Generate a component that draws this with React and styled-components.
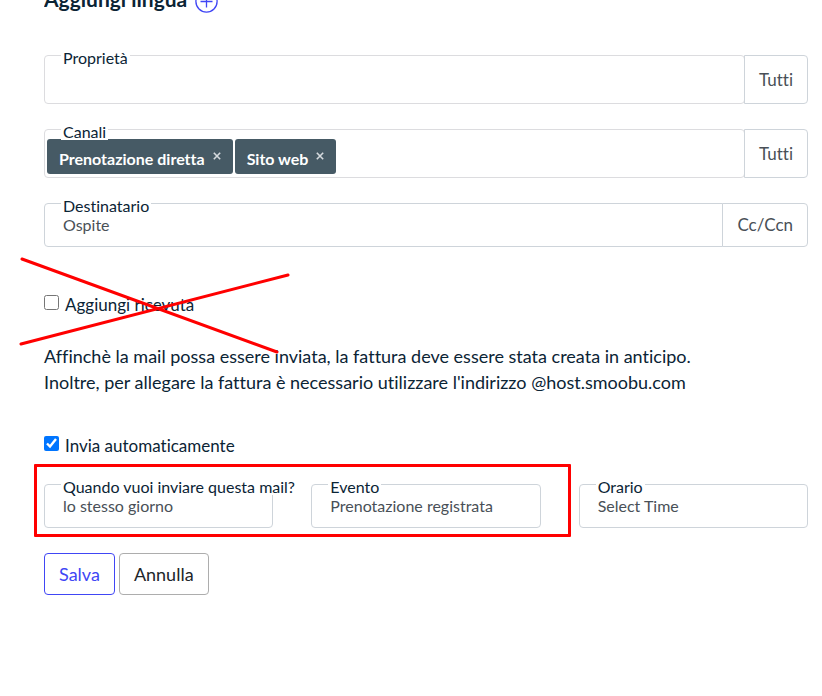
import React, { useState } from "react";
import styled, { createGlobalStyle, css } from "styled-components";

const GlobalStyle = createGlobalStyle`
  *, *::before, *::after { box-sizing: border-box; }
  body {
    margin: 0;
    background: #fff;
    color: #0b2435;
    font-family: Lato, "Open Sans", sans-serif;
    font-size: 17px;
    font-variant-ligatures: none;
    line-height: 26px;
  }
  button, input, select { font: inherit; color: inherit; font-variant-ligatures: none; }
`;

const Page = styled.main`
  padding: 0 14px 40px 44px;
`;

const Heading = styled.header`
  display: flex;
  align-items: flex-end;
  gap: 8px;
  height: 13px;
  margin-bottom: 42px;
  overflow: hidden;
`;

const Title = styled.h2`
  margin: 0;
  font-size: 21px;
  line-height: 28px;
  font-weight: 700;
`;

const AddButton = styled.button`
  display: flex;
  padding: 0;
  border: 0;
  background: none;
  color: #4046f5;
  cursor: pointer;
`;

const Form = styled.form`
  display: flex;
  flex-direction: column;
`;

const Stack = styled.div`
  display: flex;
  flex-direction: column;
  gap: 25px;
`;

const Group = styled.div`
  position: relative;
  display: flex;
  min-width: 0;
`;

const FloatingLabel = styled.label`
  position: absolute;
  top: -6px;
  left: 17px;
  padding: 0 2px;
  background: #fff;
  font-size: 16px;
  line-height: 17px;
  white-space: nowrap;
`;

const outline = css`
  border: 1px solid ${(p) => (p.$soft ? "#dcdcdf" : "#ced4da")};
  border-radius: ${(p) => (p.$joined ? "4px 0 0 4px" : "4px")};
  background: #fff;
`;

const TagBox = styled.div`
  ${outline}
  display: flex;
  flex: 1;
  align-items: flex-end;
  gap: 2px;
  min-width: 0;
  height: 49px;
  padding: 3px 2px;
`;

const TagInput = styled.input`
  flex: 1;
  min-width: 0;
  height: 35px;
  border: 0;
  outline: 0;
  background: transparent;
`;

const Tag = styled.span`
  display: flex;
  gap: 8px;
  height: 35px;
  padding: 0 12px;
  border-radius: 3px;
  background: #465a65;
  color: #fff;
  font-size: 16px;
  font-weight: 700;
  line-height: 40px;
  white-space: nowrap;
`;

const RemoveTag = styled.button`
  display: flex;
  align-items: center;
  height: 34px;
  padding: 0;
  border: 0;
  background: none;
  color: #d5dade;
  cursor: pointer;
`;

const Select = styled.select`
  ${outline}
  flex: 1;
  min-width: 0;
  height: 44px;
  padding: 0 18px;
  appearance: none;
  color: #495057;
  font-size: 16px;
  line-height: 24px;
`;

const SideButton = styled.button`
  margin-left: -1px;
  padding: 0 14px;
  border: 1px solid #ced4da;
  border-radius: 0 4px 4px 0;
  background: #fff;
  color: #495057;
  cursor: pointer;
`;

const CheckRow = styled.div`
  position: relative;
  display: flex;
  gap: 6px;
  margin-top: ${(p) => p.$gap};
`;

const Checkbox = styled.input`
  flex: none;
  width: 15px;
  height: 15px;
  margin: 3px 0 0;
  accent-color: #0075ff;
`;

const Note = styled.p`
  margin: 25px 0 0;
  font-size: 18px;
`;

const Columns = styled.div`
  display: grid;
  grid-template-columns: repeat(3, minmax(0, 1fr));
  gap: 38px;
  margin-top: 25px;
`;

const Frame = styled.div`
  z-index: 1;
  grid-row: 1;
  grid-column: 1 / 3;
  margin: -20px -30px -9px -10px;
  border: 3px solid #f00;
  border-radius: 1px;
  pointer-events: none;
`;

const Cell = styled(Group)`
  grid-row: 1;
  grid-column: ${(p) => p.$column};
`;

const CrossOut = styled.svg`
  position: absolute;
  top: -36px;
  left: -26px;
  pointer-events: none;
`;

const Actions = styled.div`
  display: flex;
  gap: 4px;
  margin-top: 25px;
`;

const Button = styled.button`
  height: 42px;
  padding: 0 14px;
  border: 1px solid ${(p) => (p.$primary ? "#4046f5" : "#adadad")};
  border-radius: 4px;
  background: #fff;
  color: ${(p) => (p.$primary ? "#4046f5" : "#212529")};
  font-size: 18px;
  cursor: pointer;
`;

function TagField({ id, label, initial = [] }) {
  const [tags, setTags] = useState(initial);
  return (
    <Group>
      <TagBox $soft>
        {tags.map((tag) => (
          <Tag key={tag}>
            {tag}
            <RemoveTag
              type="button"
              aria-label={`Rimuovi ${tag}`}
              onClick={() => setTags(tags.filter((t) => t !== tag))}
            >
              <svg width="8" height="8" viewBox="0 0 8 8" stroke="currentColor" strokeWidth="1.6">
                <path d="M0.8 0.8 7.2 7.2M7.2 0.8 0.8 7.2" />
              </svg>
            </RemoveTag>
          </Tag>
        ))}
        <TagInput id={id} type="text" />
      </TagBox>
      <SideButton type="button">Tutti</SideButton>
      <FloatingLabel htmlFor={id}>{label}</FloatingLabel>
    </Group>
  );
}

function SelectCell({ id, label, value, column }) {
  return (
    <Cell $column={column}>
      <Select id={id}>
        <option>{value}</option>
      </Select>
      <FloatingLabel htmlFor={id}>{label}</FloatingLabel>
    </Cell>
  );
}

export default function App() {
  return (
    <>
      <GlobalStyle />
      <Page>
        <Heading>
          <Title>Aggiungi lingua</Title>
          <AddButton type="button" aria-label="Aggiungi lingua">
            <svg width="23" height="23" viewBox="0 0 23 23" fill="none" stroke="currentColor" strokeWidth="1.3">
              <circle cx="11.5" cy="11.5" r="10.6" />
              <path d="M11.5 5.5v12M5.5 11.5h12" />
            </svg>
          </AddButton>
        </Heading>
        <Form onSubmit={(e) => e.preventDefault()}>
          <Stack>
            <TagField id="property" label="Proprietà" />
            <TagField id="channels" label="Canali" initial={["Prenotazione diretta", "Sito web"]} />
            <Group>
              <Select id="recipient" $joined>
                <option>Ospite</option>
              </Select>
              <SideButton type="button">Cc/Ccn</SideButton>
              <FloatingLabel htmlFor="recipient">Destinatario</FloatingLabel>
            </Group>
          </Stack>
          <CheckRow $gap="45px">
            <Checkbox id="receipt" type="checkbox" />
            <label htmlFor="receipt">Aggiungi ricevuta</label>
            <CrossOut width="274" height="100" viewBox="0 0 274 100" stroke="#f00" strokeWidth="3" strokeLinecap="round">
              <path d="M4 3 259 96M3 88 270 19" />
            </CrossOut>
          </CheckRow>
          <Note>
            Affinchè la mail possa essere inviata, la fattura deve essere stata creata in anticipo.
            <br />
            Inoltre, per allegare la fattura è necessario utilizzare l'indirizzo @host.smoobu.com
          </Note>
          <CheckRow $gap="38px">
            <Checkbox id="auto" type="checkbox" defaultChecked />
            <label htmlFor="auto">Invia automaticamente</label>
          </CheckRow>
          <Columns>
            <SelectCell id="when" label="Quando vuoi inviare questa mail?" value="lo stesso giorno" column={1} />
            <SelectCell id="event" label="Evento" value="Prenotazione registrata" column={2} />
            <SelectCell id="time" label="Orario" value="Select Time" column={3} />
            <Frame />
          </Columns>
          <Actions>
            <Button type="submit" $primary>Salva</Button>
            <Button type="button">Annulla</Button>
          </Actions>
        </Form>
      </Page>
    </>
  );
}
